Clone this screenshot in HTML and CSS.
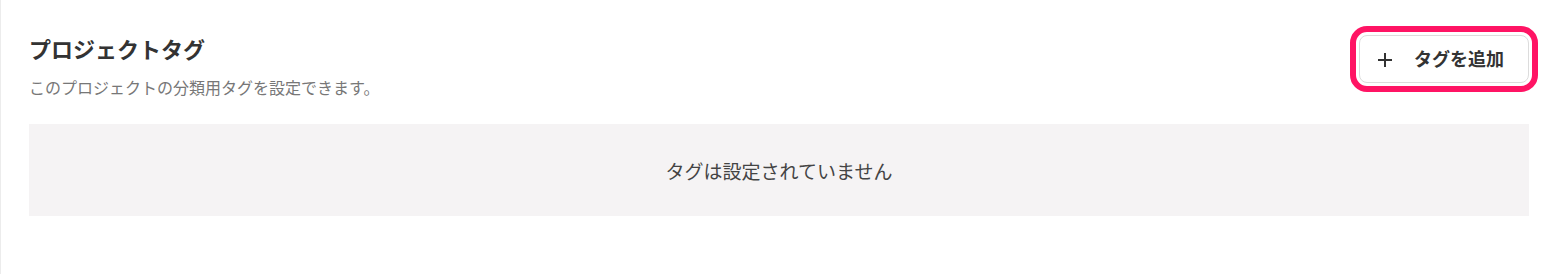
FILE: index.html
```html
<!DOCTYPE html>
<html lang="ja">
<head>
    <meta charset="UTF-8">
    <meta name="viewport" content="width=device-width, initial-scale=1.0">
    <title>プロジェクトタグ</title>
    <link rel="stylesheet" href="styles.css">
</head>
<body>

    <div class="ptag-panel">
        <div class="ptag-header">
            <div class="ptag-heading">
                <h2>プロジェクトタグ</h2>
                <p class="ptag-desc">このプロジェクトの分類用タグを設定できます。</p>
            </div>
            <button class="ptag-btn-add">
                <svg class="ptag-plus" width="16" height="16" viewBox="0 0 16 16">
                    <path d="M8 1v14M1 8h14" stroke="#333" stroke-width="2" fill="none"/>
                </svg>
                <span>タグを追加</span>
            </button>
        </div>

        <div class="ptag-empty">タグは設定されていません</div>
    </div>

</body>
</html>
```

FILE: styles.css
```css
:root {
    --text-color: #333;
    --muted-color: #777;
    --empty-bg: #f5f3f4;
    --focus-color: #ff1464;
}

body {
    font-family: "Noto Sans CJK JP", "Noto Sans", sans-serif;
    background-color: #fff;
    margin: 0;
    padding: 0;
}

.ptag-panel {
    border-left: 1px solid #ececec;
    min-height: 274px;
    padding: 0 29px 0 28px;
    box-sizing: border-box;
}

.ptag-header {
    display: flex;
    justify-content: space-between;
    align-items: flex-start;
    padding-top: 32px;
}

.ptag-heading h2 {
    margin: 0;
    font-size: 22px;
    line-height: 32px;
    font-weight: bold;
    color: var(--text-color);
}

.ptag-desc {
    margin: 12px 0 0;
    font-size: 16px;
    line-height: 22px;
    color: var(--muted-color);
}

.ptag-btn-add {
    margin-top: 3px;
    width: 170px;
    height: 48px;
    display: flex;
    align-items: center;
    gap: 21px;
    padding: 0 0 2px 17px;
    background-color: #fff;
    border: 1px solid #dcdcdc;
    border-radius: 8px;
    outline: 6px solid var(--focus-color);
    outline-offset: 3px;
    font-family: inherit;
    font-size: 18px;
    font-weight: bold;
    color: var(--text-color);
    cursor: pointer;
}

.ptag-plus {
    flex: none;
    margin-top: 4px;
}

.ptag-empty {
    margin-top: 26px;
    height: 92px;
    display: flex;
    align-items: center;
    justify-content: center;
    background-color: var(--empty-bg);
    font-size: 19px;
    color: #444;
}
```
